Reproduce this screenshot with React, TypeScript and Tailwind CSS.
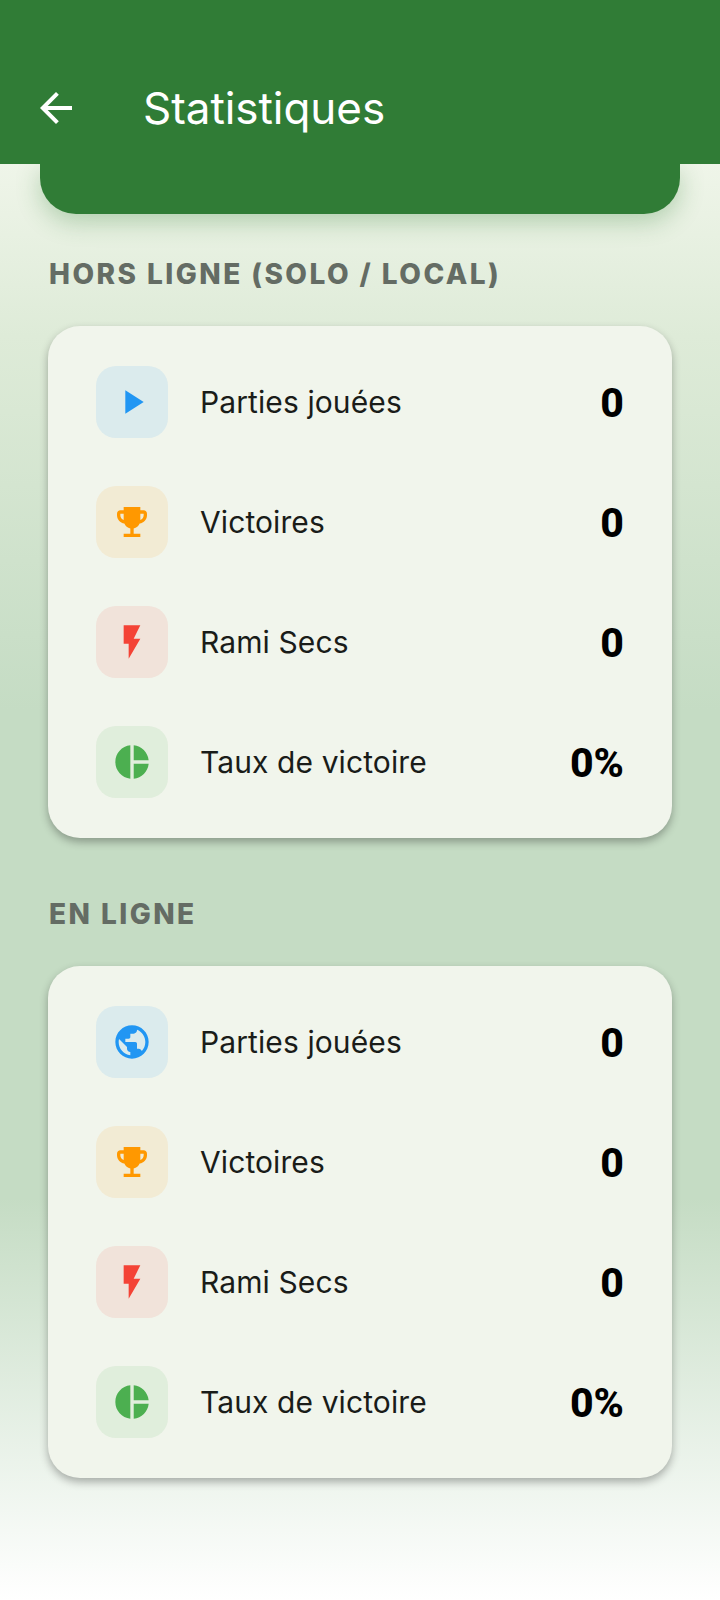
import React from 'react';

const ICONS = {
  play: 'M8 5v14l11-7z',
  trophy:
    'M19 5h-2V3H7v2H5c-1.1 0-2 .9-2 2v1c0 2.55 1.92 4.63 4.39 4.94.63 1.5 1.98 2.63 3.61 2.96V19H7v2h10v-2h-4v-3.1c1.63-.33 2.98-1.46 3.61-2.96C19.08 12.63 21 10.55 21 8V7c0-1.1-.9-2-2-2zM5 8V7h2v3.82C5.84 10.4 5 9.3 5 8zm14 0c0 1.3-.84 2.4-2 2.82V7h2v1z',
  flash: 'M7 2v11h3v9l7-12h-4l4-8z',
  pie: 'M11 2v20c-5.07-.5-9-4.79-9-10s3.93-9.5 9-10zm2.03 0v8.99H22c-.47-4.74-4.24-8.52-8.97-8.99zm0 11.01V22c4.74-.47 8.5-4.25 8.97-8.99h-8.97z',
  globe:
    'M12 2C6.48 2 2 6.48 2 12s4.48 10 10 10 10-4.48 10-10S17.52 2 12 2zm-1 17.93c-3.95-.49-7-3.85-7-7.93 0-.62.08-1.21.21-1.79L9 15v1c0 1.1.9 2 2 2v1.93zm6.9-2.54c-.26-.81-1-1.39-1.9-1.39h-1v-3c0-.55-.45-1-1-1H8v-2h2c.55 0 1-.45 1-1V7h2c1.1 0 2-.9 2-2v-.41c2.93 1.19 5 4.06 5 7.41 0 2.08-.8 3.97-2.1 5.39z',
  back: 'M20 11H7.83l5.59-5.59L12 4l-8 8 8 8 1.41-1.41L7.83 13H20v-2z',
};

type Stat = { icon: string; box: string; color: string; label: string; value: string };

const rows = (first: string): Stat[] => [
  { icon: first, box: 'bg-[#2196F3]/10', color: 'text-[#2196F3]', label: 'Parties jouées', value: '0' },
  { icon: ICONS.trophy, box: 'bg-[#FF9800]/10', color: 'text-[#FF9800]', label: 'Victoires', value: '0' },
  { icon: ICONS.flash, box: 'bg-[#F44336]/10', color: 'text-[#F44336]', label: 'Rami Secs', value: '0' },
  { icon: ICONS.pie, box: 'bg-[#4CAF50]/10', color: 'text-[#4CAF50]', label: 'Taux de victoire', value: '0%' },
];

const StatRow: React.FC<{ stat: Stat }> = ({ stat }) => (
  <div className="flex items-center h-[72px]">
    <div className={`flex items-center justify-center w-[72px] h-[72px] rounded-[20px] ${stat.box}`}>
      <svg viewBox="0 0 24 24" className={`w-10 h-10 ${stat.color}`} fill="currentColor">
        <path d={stat.icon} />
      </svg>
    </div>
    <span className="ml-8 flex-1 text-[30px] tracking-[0.1px] leading-none text-[#1a1c19]">{stat.label}</span>
    <span className="pt-[2px] text-[41px] leading-none font-extrabold text-black font-['Roboto',sans-serif]">{stat.value}</span>
  </div>
);

const Section: React.FC<{ title: string; stats: Stat[] }> = ({ title, stats }) => (
  <section>
    <h2 className="ml-[49px] h-[28px] flex items-center text-[28px] font-extrabold tracking-[2.45px] text-[#646c64]">{title}</h2>
    <div className="mx-12 mt-[38px] px-12 py-10 flex flex-col gap-12 bg-[#f1f5ec] rounded-[32px] shadow-[0_4px_8px_rgba(0,0,0,0.3)]">
      {stats.map((s) => (
        <StatRow key={s.label} stat={s} />
      ))}
    </div>
  </section>
);

export default function App() {
  return (
    <div className="w-[720px] h-[1600px] overflow-hidden flex flex-col font-['Inter',sans-serif]">
      <header className="relative z-10 h-[164px] shrink-0 bg-[#307c36] flex items-center pt-[52px]">
        <svg viewBox="0 0 24 24" className="ml-8 w-12 h-12 text-white" fill="currentColor">
          <path d={ICONS.back} />
        </svg>
        <h1 className="ml-[63px] text-[44px] leading-none tracking-[-0.05px] text-white">Statistiques</h1>
      </header>
      <main className="flex-1 bg-[linear-gradient(to_bottom,#eff5e9_0%,#deebd8_12%,#c5dcc4_38%,#c5dcc4_72%,#ffffff_100%)]">
        <div className="mx-10 h-[50px] bg-[#307c36] rounded-b-[36px] shadow-[0_8px_24px_rgba(46,125,50,0.3)]" />
        <div className="mt-[46px] flex flex-col gap-[62px]">
          <Section title="HORS LIGNE (SOLO / LOCAL)" stats={rows(ICONS.play)} />
          <Section title="EN LIGNE" stats={rows(ICONS.globe)} />
        </div>
      </main>
    </div>
  );
}
